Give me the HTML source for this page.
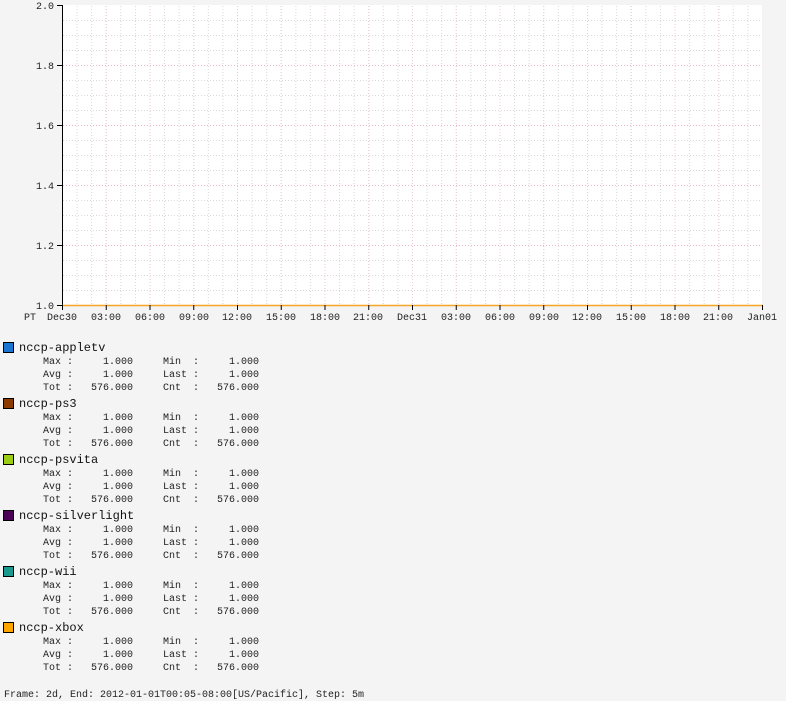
<!DOCTYPE html>
<html><head><meta charset="utf-8"><style>
html,body{margin:0;padding:0;background:#f4f4f4;width:786px;height:701px;overflow:hidden;position:relative}
svg{position:absolute;left:0;top:0}
.t{font-family:"Liberation Mono",monospace;font-size:10px;fill:#222}
.n{font-family:"Liberation Mono",monospace;font-size:12px;fill:#111}
</style></head><body>
<svg width="786" height="701" viewBox="0 0 786 701">
<defs>
<pattern id="vm" x="62" y="0" width="14.5833" height="701" patternUnits="userSpaceOnUse">
<line x1="0.5" y1="0" x2="0.5" y2="701" stroke="#d8d8d8" stroke-width="1" stroke-dasharray="1,2"/>
</pattern>
<pattern id="hm" x="0" y="5" width="786" height="15" patternUnits="userSpaceOnUse">
<line x1="0" y1="0.5" x2="786" y2="0.5" stroke="#d8d8d8" stroke-width="1" stroke-dasharray="1,2"/>
</pattern>
<pattern id="vM" x="62" y="0" width="43.75" height="701" patternUnits="userSpaceOnUse">
<line x1="0.5" y1="0" x2="0.5" y2="701" stroke="#ecc8d0" stroke-width="1" stroke-dasharray="1,2"/>
</pattern>
<pattern id="hM" x="0" y="5" width="786" height="60" patternUnits="userSpaceOnUse">
<line x1="0" y1="0.5" x2="786" y2="0.5" stroke="#f0b8c4" stroke-width="1" stroke-dasharray="1,2"/>
</pattern>
</defs>
<rect x="62" y="5" width="700" height="300" fill="#fff"/>
<rect x="63" y="5" width="699" height="300" fill="url(#vm)"/>
<rect x="62" y="6" width="700" height="299" fill="url(#hm)"/>
<rect x="63" y="5" width="699" height="300" fill="url(#vM)"/>
<rect x="62" y="6" width="700" height="299" fill="url(#hM)"/>
<line x1="62.5" y1="5" x2="62.5" y2="306" stroke="#000"/>
<line x1="57" y1="5.5" x2="62" y2="5.5" stroke="#000"/>
<line x1="57" y1="65.5" x2="62" y2="65.5" stroke="#000"/>
<line x1="57" y1="125.5" x2="62" y2="125.5" stroke="#000"/>
<line x1="57" y1="185.5" x2="62" y2="185.5" stroke="#000"/>
<line x1="57" y1="245.5" x2="62" y2="245.5" stroke="#000"/>
<line x1="57" y1="305.5" x2="62" y2="305.5" stroke="#000"/>
<line x1="62" y1="305.5" x2="763" y2="305.5" stroke="#f5a623" stroke-width="1.5"/>
<g stroke="#000">
<line x1="62.5" y1="305" x2="62.5" y2="310"/><line x1="106.25" y1="305" x2="106.25" y2="310"/><line x1="150" y1="305" x2="150" y2="310"/><line x1="193.75" y1="305" x2="193.75" y2="310"/><line x1="237.5" y1="305" x2="237.5" y2="310"/><line x1="281.25" y1="305" x2="281.25" y2="310"/><line x1="325" y1="305" x2="325" y2="310"/><line x1="368.75" y1="305" x2="368.75" y2="310"/><line x1="412.5" y1="305" x2="412.5" y2="310"/><line x1="456.25" y1="305" x2="456.25" y2="310"/><line x1="500" y1="305" x2="500" y2="310"/><line x1="543.75" y1="305" x2="543.75" y2="310"/><line x1="587.5" y1="305" x2="587.5" y2="310"/><line x1="631.25" y1="305" x2="631.25" y2="310"/><line x1="675" y1="305" x2="675" y2="310"/><line x1="718.75" y1="305" x2="718.75" y2="310"/><line x1="762.5" y1="305" x2="762.5" y2="310"/>
</g>
<g class="t" text-anchor="end">
<text x="54" y="9">2.0</text><text x="54" y="69">1.8</text><text x="54" y="129">1.6</text><text x="54" y="189">1.4</text><text x="54" y="249">1.2</text><text x="54" y="309">1.0</text>
</g>
<g class="t" text-anchor="middle">
<text x="30" y="320">PT</text>
<text x="62" y="320">Dec30</text><text x="106" y="320">03:00</text><text x="150" y="320">06:00</text><text x="194" y="320">09:00</text><text x="237" y="320">12:00</text><text x="281" y="320">15:00</text><text x="325" y="320">18:00</text><text x="368" y="320">21:00</text><text x="412" y="320">Dec31</text><text x="456" y="320">03:00</text><text x="500" y="320">06:00</text><text x="544" y="320">09:00</text><text x="587" y="320">12:00</text><text x="631" y="320">15:00</text><text x="675" y="320">18:00</text><text x="718" y="320">21:00</text><text x="762" y="320">Jan01</text>
</g>
<g id="legend">
<rect x="3.5" y="342.5" width="10" height="10" fill="#1a75d2" stroke="#000"/>
<text class="n" x="19" y="351">nccp-appletv</text>
<rect x="3.5" y="398.5" width="10" height="10" fill="#8b3a00" stroke="#000"/>
<text class="n" x="19" y="407">nccp-ps3</text>
<rect x="3.5" y="454.5" width="10" height="10" fill="#9acd14" stroke="#000"/>
<text class="n" x="19" y="463">nccp-psvita</text>
<rect x="3.5" y="510.5" width="10" height="10" fill="#4b0055" stroke="#000"/>
<text class="n" x="19" y="519">nccp-silverlight</text>
<rect x="3.5" y="566.5" width="10" height="10" fill="#1a9a8e" stroke="#000"/>
<text class="n" x="19" y="575">nccp-wii</text>
<rect x="3.5" y="622.5" width="10" height="10" fill="#ffa500" stroke="#000"/>
<text class="n" x="19" y="631">nccp-xbox</text>
</g>
<g class="t">
<text x="43" y="364" xml:space="preserve">Max :     1.000     Min  :     1.000</text>
<text x="43" y="377" xml:space="preserve">Avg :     1.000     Last :     1.000</text>
<text x="43" y="390" xml:space="preserve">Tot :   576.000     Cnt  :   576.000</text>
<text x="43" y="420" xml:space="preserve">Max :     1.000     Min  :     1.000</text>
<text x="43" y="433" xml:space="preserve">Avg :     1.000     Last :     1.000</text>
<text x="43" y="446" xml:space="preserve">Tot :   576.000     Cnt  :   576.000</text>
<text x="43" y="476" xml:space="preserve">Max :     1.000     Min  :     1.000</text>
<text x="43" y="489" xml:space="preserve">Avg :     1.000     Last :     1.000</text>
<text x="43" y="502" xml:space="preserve">Tot :   576.000     Cnt  :   576.000</text>
<text x="43" y="532" xml:space="preserve">Max :     1.000     Min  :     1.000</text>
<text x="43" y="545" xml:space="preserve">Avg :     1.000     Last :     1.000</text>
<text x="43" y="558" xml:space="preserve">Tot :   576.000     Cnt  :   576.000</text>
<text x="43" y="588" xml:space="preserve">Max :     1.000     Min  :     1.000</text>
<text x="43" y="601" xml:space="preserve">Avg :     1.000     Last :     1.000</text>
<text x="43" y="614" xml:space="preserve">Tot :   576.000     Cnt  :   576.000</text>
<text x="43" y="644" xml:space="preserve">Max :     1.000     Min  :     1.000</text>
<text x="43" y="657" xml:space="preserve">Avg :     1.000     Last :     1.000</text>
<text x="43" y="670" xml:space="preserve">Tot :   576.000     Cnt  :   576.000</text>
<text x="4" y="697">Frame: 2d, End: 2012-01-01T00:05-08:00[US/Pacific], Step: 5m</text>
</g>
</svg>
</body></html>
